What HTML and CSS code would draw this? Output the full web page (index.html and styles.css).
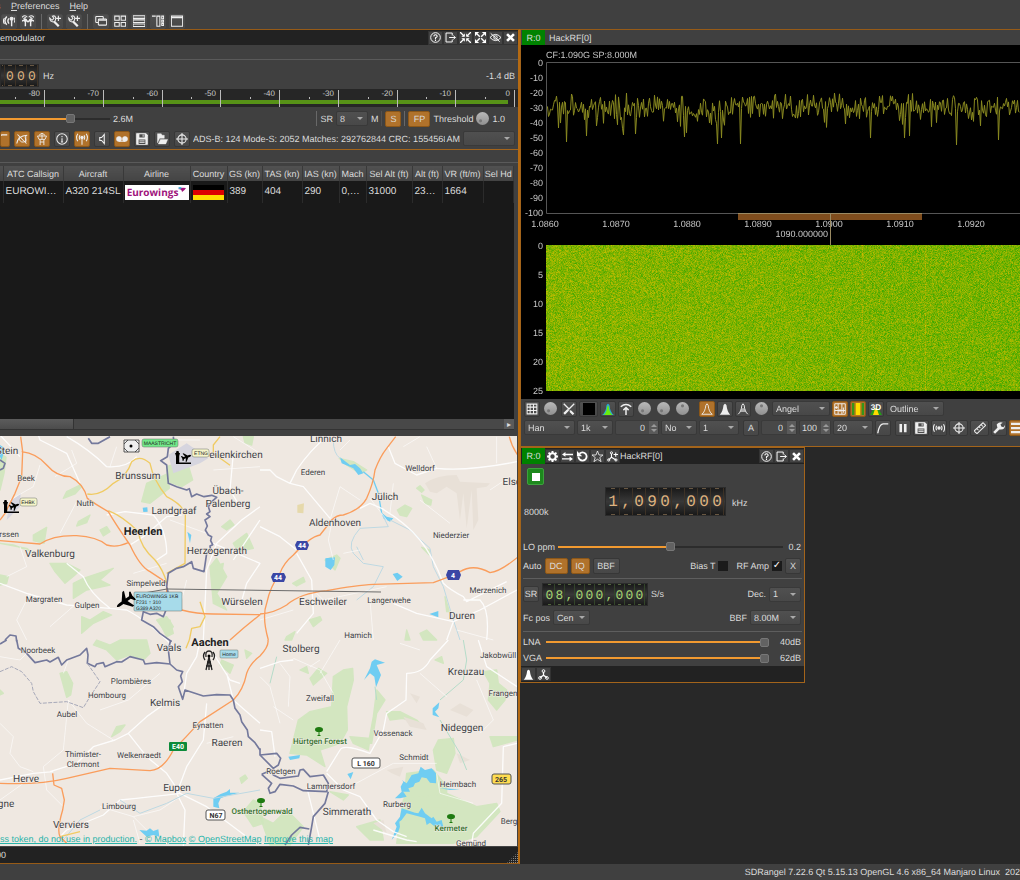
FILE: index.html
```html
<!DOCTYPE html>
<html lang="en">
<head>
<meta charset="utf-8">
<title>SDRangel</title>
<link rel="stylesheet" href="styles.css">
</head>
<body>
<svg class="sprite" aria-hidden="true">
  <symbol id="i-ant" viewBox="0 0 16 16"><path d="M11.500 15V7M5 2Q0 8 5 13M8 4.500Q5 8 8 11.500" stroke-width="1.900"/><path d="M2 4Q-1 8 2 12M15 3.500Q16.500 7 15 10"/><circle cx="11.500" cy="5" r="2" fill="currentColor"/></symbol>
  <symbol id="i-mimo" viewBox="0 0 16 16"><path d="M4.500 15V8M11.500 15V8M0 8L4.500 6L8 9L11.500 6L16 8" stroke-width="1.900"/><path d="M0 3Q4-1 7 3M9 3Q12-1 16 3M2 5L5 3M14 5L11 3" stroke-width="1.600"/><circle cx="4.500" cy="7" r="1.500" fill="currentColor"/><circle cx="11.500" cy="7" r="1.500" fill="currentColor"/></symbol>
  <symbol id="i-wplus" viewBox="0 0 16 16"><path d="M7 9L13 15" stroke-width="3"/><path d="M1 4L4 7L6.500 4.500L4.500 1.500Q9 0 9 5L8.500 7L7 9Q1 10 1 4Z"/><path d="M12.500 1V8M9.500 4.500H16" stroke-width="1.500"/></symbol>
  <symbol id="i-windows" viewBox="0 0 16 16"><rect x="1" y="2" width="10" height="8" rx="1"/><rect x="4.500" y="5.500" width="11" height="8" rx="1" fill="#4a4a4a"/><path d="M5 7H15"/></symbol>
  <symbol id="i-tiles" viewBox="0 0 16 16"><path d="M1 1.500H7V7H1ZM9.500 1.500H15.500V7H9.500ZM1 10H7V15H1ZM9.500 10H15.500V15H9.500Z"/></symbol>
  <symbol id="i-rows" viewBox="0 0 16 16"><path d="M0 1H16V4.500H0ZM0 6.500H16V10H0ZM0 12H16V15.500H0Z"/></symbol>
  <symbol id="i-cols" viewBox="0 0 16 16"><path d="M0 1.500H5M6.500 1.500H10.500V15H6.500ZM13 1.500H15.500V5H13ZM13 7H15.500V9.500H13ZM13 11.500H15.500V14H13Z"/></symbol>
  <symbol id="i-win" viewBox="0 0 16 16"><path d="M.500 1.500H15.500V15H.500ZM0 3.500H16"/></symbol>
  <symbol id="i-help" viewBox="0 0 16 16"><circle cx="8" cy="8" r="7"/><path d="M5.500 6.300Q5.800 4 8 4T10.500 6.200Q10.500 7.200 8 8.500V10M8 11V13" stroke-width="1.600"/></symbol>
  <symbol id="i-exit" viewBox="0 0 16 16"><path d="M10.500 5V1.500H1.500V14.500H10.500V11M6 8H15M12 5L15 8L12 11"/></symbol>
  <symbol id="i-shrink" viewBox="0 0 16 16"><path d="M0 0L6 6M16 0L10 6M0 16L6 10M16 16L10 10" stroke-width="2"/><path d="M7 2V7H2ZM9 2V7H14ZM7 14V9H2ZM9 14V9H14Z" fill="currentColor" stroke="none"/></symbol>
  <symbol id="i-grow" viewBox="0 0 16 16"><path d="M3 3L7 7M13 3L9 7M3 13L7 9M13 13L9 9" stroke-width="2"/><path d="M0 0H6L0 6ZM16 0H10L16 6ZM0 16H6L0 10ZM16 16H10L16 10Z" fill="currentColor" stroke="none"/></symbol>
  <symbol id="i-hide" viewBox="0 0 16 16"><path d="M0 8Q8-1 16 8Q8 17 0 8ZM1 2L14 14"/><circle cx="8" cy="8" r="2.500"/></symbol>
  <symbol id="i-x" viewBox="0 0 16 16"><path d="M3 3L13 13M13 3L3 13" stroke-width="3.800"/></symbol>
  <symbol id="i-curve" viewBox="0 0 16 16"><path d="M1 15Q3 3 8 2.500H15" stroke-width="1.900"/></symbol>
  <symbol id="i-nocurve" viewBox="0 0 16 16"><path d="M2 2L14 14M1 14Q2 4 15 3M13 3V12" stroke-width="1.400"/><path d="M4 6Q5 13 10 12T12 6" stroke-width="1.200"/></symbol>
  <symbol id="i-tower" viewBox="0 0 16 16"><path d="M4 3L8 0L12 3M2 4H14L12 8.500H4ZM5.500 9V16M10.500 9V16M5.500 12H10.500M8 0V8" stroke-width="1.200"/></symbol>
  <symbol id="i-info" viewBox="0 0 16 16"><circle cx="8" cy="8" r="7"/><path d="M8 7V12M8 4V5.500M6.500 12H9.500" stroke-width="1.500"/></symbol>
  <symbol id="i-bcast" viewBox="0 0 16 16"><path d="M8 7V15.500M2.500 1Q-1 6 2.500 11M13.500 1Q17 6 13.500 11M5.300 3Q3.500 6 5.300 9M10.700 3Q12.500 6 10.700 9" stroke-width="1.400"/><circle cx="8" cy="6" r="1.600" fill="currentColor"/></symbol>
  <symbol id="i-spk" viewBox="0 0 16 16"><path d="M5 6H7.500L11 2V14L7.500 10H5Z" stroke-width="1.500"/></symbol>
  <symbol id="i-voice" viewBox="0 0 16 16"><circle cx="4" cy="8" r="3" fill="currentColor"/><circle cx="12" cy="8" r="3" fill="currentColor"/><path d="M4 11H12"/></symbol>
  <symbol id="i-save" viewBox="0 0 16 16"><path d="M1 1H13L15 3V15H1Z" fill="currentColor"/><path d="M4.500 1.500H11.500V6H4.500Z M3.500 8.500H12.500V14.500H3.500Z" fill="#4b4b4b" stroke="none"/><path d="M4.500 10.500H11.500M4.500 12.500H11.500M9.500 2V5" stroke-width="1.200"/></symbol>
  <symbol id="i-open" viewBox="0 0 16 16"><path d="M2 13V1H7L8 3H11V7H5L2 13Z M3 14.500L6 8.500H15.500L13 14.500Z" fill="currentColor" stroke-width=".6"/></symbol>
  <symbol id="i-target" viewBox="0 0 16 16"><circle cx="8" cy="8" r="5.500"/><path d="M8 0V16M0 8H16"/></symbol>
  <symbol id="i-grid" viewBox="0 0 16 16"><path d="M1.500 1.500H14.500V14.500H1.500ZM5.500 1.500V14.500M10 1.500V14.500M1.500 5.500H14.500M1.500 10H14.500"/></symbol>
  <symbol id="i-brush" viewBox="0 0 16 16"><path d="M1 1L8 8M9 10L13 14M15 1L7 9" stroke-width="1.800"/><path d="M7 9L1.500 14.500M10 11L14 15" stroke-width="3"/></symbol>
  <symbol id="i-spec" viewBox="0 0 16 16"><path d="M0 16Q5 13 6 3Q8-1 10 3Q11 13 16 16Z" fill="#28a7d8" stroke="none"/><path d="M2 16Q6 13 7 5Q8 1 9 5Q10 13 14 16Z" fill="#6aec10" stroke="none"/></symbol>
  <symbol id="i-up" viewBox="0 0 16 16"><path d="M8 16V6M4.500 9.500L8 6L11.500 9.500M1 5Q8-1 15 5" stroke-width="2"/></symbol>
  <symbol id="i-peak" viewBox="0 0 16 16"><path d="M1 15Q5.500 12 6.500 3Q8-1 9.500 3Q10.500 12 15 15Z" stroke-width="1.200"/></symbol>
  <symbol id="i-fill" viewBox="0 0 16 16"><path d="M1 15.500Q5 12 6 3Q8-1 10 3Q11 12 15 15.500Z" fill="currentColor" stroke="none"/></symbol>
  <symbol id="i-half" viewBox="0 0 16 16"><path d="M6 7H10L11.500 12H4.500Z" fill="#aaa" stroke="none"/><path d="M1.500 15Q5.500 12 6.500 3Q8-1 9.500 3Q10.500 12 14.500 15" stroke-width="1.300"/></symbol>
  <symbol id="i-hist" viewBox="0 0 16 16"><path d="M1 1H15V15H1ZM5.500 1V15M10.500 1V15M1 10H15M1 6H5M3 4V8M8 8V12M12.500 6V13" stroke-width="1.300"/></symbol>
  <symbol id="i-wfall" viewBox="0 0 16 16"><path d="M0 0H16V16H0Z" fill="#35951b" stroke="none"/><path d="M3 0H13V16H3Z" fill="#b07a18" stroke="none"/><path d="M5 0H11V16H5Z" fill="#ffdc00" stroke="none"/></symbol>
  <symbol id="i-3d" viewBox="0 0 16 16"><path d="M0 16L5 7H11L16 16Z" fill="#239b18" stroke="none"/><path d="M4 16L7 7H9L12 16Z" fill="#ffd900" stroke="none"/><text x="8" y="9" text-anchor="middle" font-size="11" font-weight="bold" fill="#fff" stroke="none">3D</text></symbol>
  <symbol id="i-pause" viewBox="0 0 16 16"><path d="M5 2.500V13.500M11 2.500V13.500" stroke-width="3.500"/></symbol>
  <symbol id="i-mark" viewBox="0 0 16 16"><circle cx="8" cy="8" r="1.600" fill="currentColor"/><path d="M5 5Q3 8 5 11M2 3Q-1 8 2 13M11 5Q13 8 11 11M14 3Q17 8 14 13" stroke-width="1.500"/></symbol>
  <symbol id="i-ruler" viewBox="0 0 16 16"><path d="M0 12L12 1L15.500 4.500L4 15.500ZM4 9L6 11M7 6.500L8.500 8M10 4L12 6"/></symbol>
  <symbol id="i-wrench" viewBox="0 0 16 16"><path d="M1.500 14.500L9 7" stroke-width="3.500"/><path d="M5 3Q9-1 13 1L10 3L11 6L14 7L16 4Q16 11 9 10Q5 8 5 3Z" fill="currentColor" stroke="none"/></symbol>
  <symbol id="i-lines" viewBox="0 0 16 16"><path d="M0 2.500H16M0 8H16M0 13.500H16" stroke-width="3"/></symbol>
  <symbol id="i-gear" viewBox="0 0 16 16"><circle cx="8" cy="8" r="4.700" stroke-width="3"/><path d="M8 0V3M8 13V16M0 8H3M13 8H16M2.300 2.300L4.500 4.500M11.500 11.500L13.700 13.700M13.700 2.300L11.500 4.500M4.500 11.500L2.300 13.700" stroke-width="2.800"/></symbol>
  <symbol id="i-swap" viewBox="0 0 16 16"><path d="M3 5H16M0 11.500H13" stroke-width="2"/><path d="M5 1.500V8.500L0 5ZM11 8V15L16 11.500Z" fill="currentColor" stroke="none"/></symbol>
  <symbol id="i-reload" viewBox="0 0 16 16"><path d="M3.500 4Q8 0 12.500 4Q15.500 8 12.500 12Q8 16 3.500 12Q2 10 2 8" stroke-width="2.600"/><path d="M0 0V7.500H7.500Z" fill="currentColor" stroke="none"/></symbol>
  <symbol id="i-star" viewBox="0 0 16 16"><path d="M8 0L10.200 5.800H16L11.300 9.500L13.200 15.500L8 12L2.800 15.500L4.700 9.500L0 5.800H5.800Z" stroke-width="1.100"/></symbol>
  <symbol id="i-tree" viewBox="0 0 16 16"><path d="M6.500 4V9L2.500 13M6.500 9L13 13M9.500 5H16M12.700 2V8.500" stroke-width="1.600"/><circle cx="6.500" cy="2.700" r="1.600"/><circle cx="2.500" cy="13" r="1.600"/><circle cx="13" cy="13" r="1.600"/></symbol>
  <symbol id="i-net" viewBox="0 0 16 16"><path d="M8 4V9L3 12.500M8 9L13 12.500" stroke-width="1.900"/><circle cx="8" cy="3" r="2"/><circle cx="3" cy="13" r="2"/><circle cx="13" cy="13" r="2"/></symbol>
  <symbol id="i-plane" viewBox="-10 -10 20 20"><path d="M0-10Q1.500-9 1.500-6V-3L9 3V5L1.500 2V6L5 8.500V10L0 9L-5 10V8.500L-1.500 6V2L-9 5V3L-1.500-3V-6Q-1.500-9 0-10Z"/></symbol>
  <symbol id="i-airport" viewBox="0 0 17 16"><path d="M0 3H1L1.500 1H3.500L4 3H5L4.200 6V12.500H16V14H1V6Z"/><g transform="translate(11.500 7) rotate(70) scale(.5)"><path d="M0-10Q2-9 2-6V-3L9 3V5L2 2V6L5 8V10L0 9L-5 10V8L-2 6V2L-9 5V3L-2-3V-6Q-2-9 0-10Z"/></g></symbol>
  <symbol id="i-treepin" viewBox="0 0 10 10"><path d="M5 9.500V5M3.500 9.500H6.500" stroke="#1e7a10"/><ellipse cx="5" cy="3.500" rx="4" ry="2.600" fill="#1e7a10" stroke="none"/></symbol>
</svg>

<nav class="menubar"><a href="#">s</a><a href="#"><u>P</u>references</a><a href="#"><u>H</u>elp</a></nav>
<div class="toolbar">
  <button class="btn"><svg><use href="#i-ant"/></svg></button><button class="btn"><svg><use href="#i-mimo"/></svg></button><i class="vsep"></i>
  <button class="btn"><svg><use href="#i-wplus"/></svg></button><button class="btn"><svg><use href="#i-wplus"/></svg></button><i class="vsep"></i>
  <button class="btn"><svg><use href="#i-windows"/></svg></button><button class="btn"><svg><use href="#i-tiles"/></svg></button><button class="btn"><svg><use href="#i-rows"/></svg></button><button class="btn"><svg><use href="#i-cols"/></svg></button><button class="btn"><svg><use href="#i-win"/></svg></button>
</div>

<main class="workspace">
<section class="left">
  <header class="title dark"><span class="grow">emodulator</span>
    <button class="tb"><svg><use href="#i-help"/></svg></button><button class="tb"><svg><use href="#i-exit"/></svg></button><button class="tb"><svg><use href="#i-shrink"/></svg></button><button class="tb"><svg><use href="#i-grow"/></svg></button><button class="tb"><svg><use href="#i-hide"/></svg></button><button class="tb"><svg><use href="#i-x"/></svg></button>
  </header>
  <div class="band"></div>
  <div class="freq-row"><div class="dial"><b class="cut">,</b><b>0</b><b>0</b><b>0</b></div><span>Hz</span><span class="grow"></span><span>-1.4 dB</span></div>
  <svg class="meter" id="meter"></svg>
  <div class="row slider-row">
    <input class="range wide" type="range" aria-label="Bandwidth" min="0" max="100" value="65" style="--v:64%"><span>2.6M</span><span class="grow"></span>
    <i class="vsep"></i><label for="sr">SR</label><span class="sel w32"><select id="sr"><option>8</option></select></span><span>M</span><i class="vsep dim"></i>
    <button class="btn on w16">S</button><i class="vsep"></i><button class="btn on w21">FP</button><label for="thr">Threshold</label><input id="thr" class="knob" type="range"><span class="thr-val">1.0</span>
  </div>
  <div class="row icon-row">
    <button class="btn on half"><svg><use href="#i-curve"/></svg></button><button class="btn on"><svg><use href="#i-nocurve"/></svg></button><button class="btn on"><svg><use href="#i-tower"/></svg></button><button class="btn"><svg><use href="#i-info"/></svg></button><button class="btn on"><svg><use href="#i-bcast"/></svg></button><button class="btn"><svg><use href="#i-spk"/></svg></button><button class="btn on"><svg><use href="#i-voice"/></svg></button><button class="btn"><svg><use href="#i-save"/></svg></button><button class="btn"><svg><use href="#i-open"/></svg></button><button class="btn"><svg><use href="#i-target"/></svg></button>
    <span class="stats">ADS-B: 124 Mode-S: 2052 Matches: 292762844 CRC: 1554568</span><label for="am">AM</label><span class="sel w52"><select id="am"><option></option></select></span>
  </div>
  <div class="band lower"></div>
  <div class="table-wrap">
    <table>
      <colgroup><col class="c3"><col class="c60"><col class="c59"><col class="c67"><col class="c38"><col class="c34"><col class="c40"><col class="c38"><col class="c28"><col class="c46"><col class="c30"><col class="c41"><col></colgroup>
      <thead><tr><th></th><th>ATC Callsign</th><th>Aircraft</th><th>Airline</th><th>Country</th><th>GS (kn)</th><th>TAS (kn)</th><th>IAS (kn)</th><th>Mach</th><th>Sel Alt (ft)</th><th>Alt (ft)</th><th>VR (ft/m)</th><th>Sel Hd</th></tr></thead>
      <tbody><tr><td></td><td>EUROWI…</td><td>A320 214SL</td><td><div class="airline">Eurowings<svg viewBox="0 0 8 6"><path d="M0 2Q3 0 8 1Q7 3 4 5Q4 2 0 2Z" fill="#a0137c"/><path d="M0 1Q2-1 4 1L2 2Z" fill="#36b4d8"/></svg></div></td><td><div class="flag"></div></td><td>389</td><td>404</td><td>290</td><td>0,…</td><td>31000</td><td>23…</td><td>1664</td><td></td></tr></tbody>
    </table>
  </div>
  <div class="hscroll"><div class="handle"></div><button aria-label="Scroll right">▸</button></div>
  <div class="map-box">
  <svg class="map">
    <g class="geo" transform="translate(0 -16) scale(.33333)">
      <g class="green">
        <path d="M440 190L505 160L508 205L450 250L425 245ZM500 140L560 120L578 180L545 200L505 185ZM0 100L18 112L12 160L0 210ZM150 430L200 430L240 450L225 465L195 490L165 455ZM665 320L690 300L702 315L680 330ZM700 370L740 340L760 385L715 395ZM300 330L320 320L330 335L310 348ZM0 465L25 470L20 490L0 495ZM245 590L270 600L310 575L335 585L280 610L245 640ZM630 440L650 415L680 470L650 520L680 570L640 550ZM240 195L200 215L190 235L225 222L245 200ZM270 285L235 305L230 318L260 308ZM100 345L140 322L132 370L100 362ZM220 490L250 475L340 445L300 480L330 495L260 510L220 535ZM480 610L510 600L520 640L500 650Z"/>
        <path d="M730 50H760L755 75L735 68ZM640 440L670 430L665 460ZM470 600L500 590L520 620L500 640ZM0 370L80 385L100 400L140 410L110 400L40 375Z"/>
      </g>
      <path class="air" d="M505 105L560 70L625 115L600 130L520 160ZM30 245L62 220L60 260L20 300Z"/>
      <g class="water"><path d="M0 75L15 85L5 120L0 110ZM428 263L442 262L443 275L430 276ZM562 335L574 345L570 370Z"/></g>
      <g class="white">
        <path d="M200 50Q270 90 320 140Q380 145 410 110M320 285L375 275L460 285Q500 330 500 400L470 420M390 375L430 350L500 290L545 285M0 490L80 520L200 555L330 565L380 570Q440 600 520 680M200 430L250 470Q270 520 330 565M780 300L700 420M780 260L725 300L650 370L620 450L610 660M640 370L780 430L740 490L720 560M100 0L120 60L200 100L240 190M0 45L60 110M700 100L690 210L720 260"/>
        <path class="fine" d="M165 170L230 130L215 90M120 135L100 200L30 240M180 340L230 245M60 380L80 440L20 470M350 80L330 140M510 300L620 340M440 60L600 60M700 50L780 100M640 150L780 140M400 460L500 430M90 520L50 600L80 660M230 550L150 620M560 480L540 560"/>
      </g>
      <g class="yellow"><path d="M262 222Q300 230 340 190Q380 170 395 125Q420 103 450 130Q460 180 500 230Q550 255 556 285L555 430L500 460M325 272Q370 290 415 335Q420 380 465 420Q490 450 500 488M660 50L640 75L640 100L690 136M600 545L615 590L600 620L575 625L568 660"/></g>
      <g class="orange"><path d="M62 50L68 95L65 170L45 220L30 250L15 280L0 300M65 95Q110 100 140 135T210 170Q250 190 262 235Q290 255 325 275Q345 310 390 375Q420 440 450 455L500 488V540M0 362L120 372Q160 345 230 347Q290 350 320 375Q350 384 385 368M545 570Q590 582 640 582L780 584L730 625L690 660"/></g>
      <g class="border"><path d="M520 50L522 70L505 85L502 110L482 122L500 135L505 190L530 200L560 210L568 206L575 230L590 222L612 230L635 226L650 232L635 245L625 260L630 275L620 282L630 290L615 300L622 318L616 330L625 345L635 350L632 362L638 374L630 378L632 390L620 400L612 455L580 445L575 425L550 440L530 445L505 460L500 500L510 540L490 590L470 580L450 583L430 575L425 600L460 620L480 640L515 665M265 55L275 70L295 70L330 50M0 120L15 130L10 145L0 150M15 660L30 645L48 648L50 664"/></g>
    </g>
    <g class="geo" transform="translate(260 -16) scale(.33333)">
      <g class="green"><path d="M238 115L280 125L320 150L300 160L260 135ZM412 270L435 255L455 265L440 290L420 285ZM470 205L480 197L492 210L485 217ZM485 225L515 240L512 255L495 250ZM195 420L230 405L240 415L225 450ZM98 490L130 472L135 485L110 498ZM485 382L508 390L508 405ZM148 600L180 590L185 600L160 620ZM440 630L450 660H435ZM480 640L500 630L530 660H490ZM555 530L568 575L560 575ZM80 650L105 635L95 660H75Z"/></g>
      <path class="hill" d="M495 190Q530 165 590 165L600 185L690 190L680 200L650 205L655 300L640 330L635 210L620 325L610 220L600 300L590 220L560 200L530 220L510 215Z"/>
      <path d="M112 255L132 250L130 280L112 278Z" fill="#e6d9ab"/>
      <g class="water"><path d="M240 112L270 135L285 132L300 145L310 160L295 165L280 145L245 130ZM365 278L380 290L400 295L390 305L370 295ZM196 415L225 412L223 435L212 450L196 440ZM398 462L412 458L428 470L412 483ZM508 582L535 573L535 592Z"/><path d="M310 155L340 180L355 220L365 280" fill="none" stroke="#6fcdf2" stroke-width="4"/></g>
      <path class="stream" d="M220 60Q220 100 240 115M370 290L385 320L300 325Q260 370 280 400L310 430L370 440L340 500L290 540M390 300L450 330L510 385L520 440L550 500L580 600L600 660M290 380L310 420"/>
      <g class="white">
        <path d="M200 50Q150 90 110 150L90 190L50 170L30 150L0 150M90 190L130 200L210 295M300 265L330 250L365 265Q440 310 480 360Q520 410 550 490Q570 510 610 530L620 545L740 485M385 80L405 130L470 165L530 145Q620 155 771 125M110 400L155 480L160 580L110 640M0 320L60 350L110 390M400 550L470 580L580 605L660 570L771 510M580 605L560 660M610 540H660Q690 570 680 660"/>
        <path class="fine" d="M210 300L240 200L300 240M330 235L380 300M530 145L500 80M710 50V130M480 240L570 310M480 50L430 80M215 310L205 360L220 420M160 510L190 540L380 500M750 170L690 210M270 60L240 90M400 190L390 280M590 630L700 660M250 400L300 390M0 600L100 570M330 540L340 660"/>
      </g>
      <g class="orange"><path d="M25 660Q5 590 20 550Q30 500 60 460Q70 430 100 405Q150 350 180 345Q200 320 215 300Q230 285 250 285Q300 270 320 235Q340 190 345 150Q360 110 380 85L407 50M0 582Q40 580 80 555Q120 520 200 512Q290 495 340 493L520 488Q560 475 600 455Q640 430 690 458Q720 455 775 410M748 50Q755 80 775 108"/></g>
    </g>
    <g class="geo" transform="translate(0 204) scale(.33333)">
      <g class="green"><path d="M180 100L200 95L218 130L212 165L200 172ZM280 15L290 0L330 15L360 0H440L450 40L430 60L390 45L350 60L320 30ZM335 290L350 260L375 255L360 275ZM665 60L700 75L690 100L660 75ZM735 30L755 40L740 55ZM720 415L735 405L742 415L725 430ZM730 515L760 480L780 490L790 550L760 560L740 530ZM0 150L10 160L0 165Z"/></g>
      <g class="water"><path d="M640 475Q660 460 680 455L690 447L690 458L718 458L680 468L662 475L655 490L658 505L640 500ZM418 570L440 572L450 565L460 573L475 568L478 590L460 585L440 590Z"/></g>
      <g class="white">
        <path d="M510 180L440 230L385 280L345 300L280 320L230 370L150 395M385 280L440 350L500 400L540 460L620 500L740 590M620 190L610 300L560 380L530 460L555 510L550 620M540 460Q460 470 360 480L310 525L200 570L180 590M0 420L100 400L160 395M680 100L700 180L780 250M600 0L590 50L560 100L550 170M640 40L690 120L720 130"/>
        <path class="fine" d="M205 180L190 330L130 380L140 450L190 500M205 180L260 250L340 300M190 100L205 60M0 50L60 60L80 40M0 250L40 290L30 340L60 380L100 395M400 540L420 610M440 570L400 530L300 500M620 310L700 290M540 470L480 510L400 530M70 430L0 480M300 210L385 180L480 100"/>
      </g>
      <path class="stream" d="M780 450L640 475L560 460L500 490L420 520L360 480M190 600L240 540L300 510"/>
      <g class="yellow"><path d="M180 590L240 575M568 0L558 25"/></g>
      <g class="orange"><path d="M0 430Q120 435 200 415L330 385Q420 390 450 392Q490 390 520 330Q560 290 600 245L700 180Q730 150 740 100Q750 70 780 48Q807 20 804 0M158 400L162 435L185 445L193 480L188 510Q170 570 180 590L200 610"/></g>
      <g class="border"><path d="M50 0L55 25L80 40L105 68L140 60L150 66L175 52L185 75L200 60L240 45L260 25L264 45L262 70L285 80L290 72L310 68L315 80L350 65L365 66L390 50L430 60L435 72L470 68L510 72L530 90L548 95L542 108L547 125L535 140L548 178L555 150L610 168L650 164L690 165L700 180L705 205L720 225L725 245L742 270L745 290L765 308L780 330M0 12L20 0M512 0L505 30L510 72"/><path class="dash" d="M0 95L35 80L65 95L95 130L100 155L120 190L200 185L250 203L270 170L300 125L262 70"/></g>
    </g>
    <g class="geo" transform="translate(260 204) scale(.33333)">
      <g class="green"><path d="M115 240L150 215L215 200L220 110L250 90L278 85L280 120L260 200L262 270L240 310L180 330L195 380L140 345L90 340ZM120 90L140 80L145 100ZM175 85L200 100L160 135L150 115ZM270 290L330 295L325 330L280 310ZM350 150L375 180L350 220L335 310L325 310L340 230ZM380 215L420 215L470 240L490 260L430 235L390 240ZM535 300L580 295L585 340L560 400L530 390L520 330ZM670 95L710 90L715 130L740 150L735 180L710 210L685 180L690 130ZM690 290L771 290V300L700 320ZM430 480L560 460L650 500L710 490L720 515L650 590L580 610H410L420 540ZM0 530L40 550L80 510L130 560L90 615H30ZM525 60L545 50L550 70ZM290 560L360 540L370 600L330 600ZM210 455L265 465L250 480ZM440 400L520 390L560 440L560 500H430Z"/></g>
      <g class="relief"><path d="M380 390L430 380L420 410L395 400ZM600 190L640 210L620 230L570 210ZM430 230L490 250L500 270L450 260ZM590 340L630 360L600 370ZM340 550L370 540L380 580ZM450 160L480 170L470 190Z"/></g>
      <g class="water"><path d="M312 120L330 85L335 65L345 58L375 68L350 75L363 105L348 142L343 110L330 100ZM518 205L538 187L535 205L525 215L538 232L518 225ZM85 350L120 345L118 355L90 360ZM262 402L280 396L272 418ZM455 405L475 400L482 380L495 390L515 385L528 400V430L510 428L500 415L485 412L478 425L465 430L460 440L445 445L450 455L430 455L440 470L420 475L405 475L425 455L422 440L430 425L425 420L440 430ZM440 510L465 518L475 520L485 503L495 520L515 535L520 530L530 545L545 540L550 560L545 562L535 555L525 560L510 548L500 555L495 535L480 530L440 520L425 540L418 545L420 560L415 575L395 600L410 560L405 550L420 530L425 505ZM540 445L600 448L570 450Z"/></g>
      <path class="stream green-stream" d="M610 0L620 60L610 120L540 180M540 240L600 340L620 390M345 140L350 180M50 50L30 130"/>
      <g class="white">
        <path d="M565 0L510 60Q490 100 440 100L438 180Q410 200 380 220L370 270L330 340Q250 310 240 330L200 395M771 310L730 320L725 490L640 580L635 610M440 590L400 575L350 540L300 470L250 450L200 400M0 85L60 65L100 60M655 0L680 80L771 140M0 270L35 275L45 350M140 440L160 520L180 600M340 570L440 600L470 605"/>
        <path class="fine" d="M100 55L180 90L220 160M60 70L90 110L85 200M270 440L400 370L530 370M150 80L180 60M650 120L700 240L660 280M480 100L560 170M240 0L180 100M420 10L480 30M530 400L540 460L640 490M160 300L250 300M100 240L40 200M0 110L30 140L60 250"/>
      </g>
      <g class="border"><path d="M0 325V345L50 340L62 355L55 375L40 385L0 345M5 403L35 390L40 405L60 415L115 408L120 390L130 388L150 410L190 405L205 430L200 455L130 452L100 438L60 433L45 455L30 460L25 445L35 430L5 403M205 455L195 490L160 530L155 560L145 615M75 615L95 585L120 562L148 567"/></g>
    </g>
    <path d="M144 157L167 153L381 156" fill="none" stroke="#6b6b6b"/>
    <g class="lbl s">
      <text x="326" y="6" class="m">Linnich</text><text x="313" y="39">Ederen</text><text x="420" y="35">Welldorf</text><text x="26" y="45">Beek</text><text x="85" y="70">Nuth</text><text x="451" y="102">Niederzier</text><text x="146" y="150">Simpelveld</text><text x="44" y="166">Margraten</text><text x="87" y="172">Gulpen</text><text x="488" y="157">Merzenich</text><text x="389" y="167">Langerwehe</text><text x="358" y="202">Hamich</text><text x="498" y="222">Jakobwüll</text><text x="38" y="217">Noorbeek</text><text x="131" y="248">Plombières</text><text x="107" y="262">Hombourg</text><text x="67" y="281">Aubel</text><text x="208" y="292">Eynatten</text><text x="83" y="321">Thimister-</text><text x="83" y="331">Clermont</text><text x="139" y="322">Welkenraedt</text><text x="119" y="373">Limbourg</text><text x="320" y="265">Zweifall</text><text x="393" y="300">Vossenack</text><text x="414" y="324">Schmidt</text><text x="458" y="351">Heimbach</text><text x="397" y="371">Rurberg</text><text x="281" y="338">Roetgen</text><text x="331" y="353">Lammersdorf</text><text x="471" y="410">Gemünd</text><text x="503" y="260">Frangen</text><text x="9" y="101">rssen</text><text x="509" y="388">Berg</text>
    </g>
    <g class="lbl m">
      <text x="7" y="18">Stein</text><text x="138" y="43">Brunssum</text><text x="236" y="22">eilenkirchen</text><text x="228" y="58">Übach-</text><text x="228" y="71">Palenberg</text><text x="174" y="78">Landgraaf</text><text x="217" y="118">Herzogenrath</text><text x="50" y="121">Valkenburg</text><text x="385" y="64">Jülich</text><text x="512" y="49">Elsd</text><text x="335" y="90">Aldenhoven</text><text x="242" y="169">Würselen</text><text x="323" y="169">Eschweiler</text><text x="462" y="183">Duren</text><text x="169" y="215">Vaals</text><text x="301" y="216">Stolberg</text><text x="466" y="239">Kreuzau</text><text x="165" y="270">Kelmis</text><text x="227" y="310">Raeren</text><text x="462" y="295">Nideggen</text><text x="26" y="346">Herve</text><text x="177" y="355">Eupen</text><text x="6" y="371">gne</text><text x="71" y="392">Verviers</text><text x="347" y="379">Simmerath</text>
    </g>
    <g class="lbl l"><text x="143" y="99">Heerlen</text><text x="210" y="210">Aachen</text></g>
    <g class="lbl park"><text x="320" y="308">Hürtgen Forest</text><text x="262" y="378">Osthertogenwald</text><text x="451" y="395">Kermeter</text></g>
    <use href="#i-treepin" x="314" y="290" width="10" height="10"/><use href="#i-treepin" x="256" y="361" width="10" height="10"/><use href="#i-treepin" x="446" y="377" width="10" height="10"/>
    <g class="shield">
      <path d="M295 109L297 105H307L309 109L307 114H297ZM271 141L273 137H284L286 141L284 146H273ZM446 139L448 134H459L461 139L459 144H448Z" fill="#3b47a5"/>
      <rect x="169" y="306" width="18" height="9" rx="1" fill="#0d8b3a"/>
      <g stroke="#555"><rect x="206" y="374" width="19" height="10" rx="2" fill="#fff"/><rect x="352" y="322" width="28" height="10" rx="2" fill="#fff"/><rect x="492" y="338" width="19" height="10" rx="2" fill="#ffdc50"/></g>
      <g fill="#fff"><text x="302" y="112">44</text><text x="278" y="144">44</text><text x="453" y="142">4</text><text x="178" y="313">E40</text></g>
      <g fill="#333"><text x="216" y="382">N67</text><text x="366" y="330">L 160</text><text x="501" y="346">265</text></g>
    </g>
    <path d="M124 4H139V16H124ZM124 8L128 4M135 4L139 8M124 12L128 16M135 16L139 12" fill="#eee" stroke="#333" stroke-width=".8"/><circle cx="131" cy="10" r="1.500"/>
    <use href="#i-airport" x="175" y="14" width="17" height="16"/><use href="#i-airport" x="3" y="63" width="17" height="16"/>
    <g class="pin"><rect x="142" y="3" width="36" height="8" rx="2" fill="#73e889"/><rect x="192" y="13" width="17" height="8" rx="2" fill="#f6f5ca"/><rect x="20" y="62" width="17" height="8" rx="2" fill="#f6f5ca"/><rect x="220" y="214" width="18" height="8" rx="1" fill="#a7dbea"/><rect x="134" y="156" width="48" height="19" rx="1" fill="#a7dbea"/>
      <text x="160" y="9" text-anchor="middle">MAASTRICHT</text><text x="201" y="19" text-anchor="middle">ETNG</text><text x="28" y="68" text-anchor="middle">EHBK</text><text x="229" y="220" text-anchor="middle">Home</text><text x="136" y="162">EUROWINGS 1KB</text><text x="136" y="168">F231 ↑ 310</text><text x="136" y="174">G389 A320</text></g>
    <g transform="translate(125 165) rotate(235)"><use href="#i-plane" x="-10" y="-10" width="20" height="20"/></g>
    <path d="M209 221V234M206 234L209 221L212 234M206 230H212M207 226H211M205 224Q202 220 205 216M213 224Q216 220 213 216M206 221Q205 215 209 215T212 221" fill="none" stroke="#222" stroke-width="1.300"/><circle cx="209" cy="220" r="1.500"/>
  </svg>
  <p class="attrib"><a href="#">ss token, do not use in production.</a> - <a href="#">© Mapbox</a> <a href="#">© OpenStreetMap</a> <a href="#">Improve this map</a></p>
  </div>
  <footer class="strip"><span>00</span><i class="grip"></i></footer>
</section>

<section class="right">
  <article class="spectrum">
    <header class="title"><span class="badge">R:0</span><span class="name">HackRF[0]</span></header>
    <div class="plots"><canvas id="plot"></canvas><svg id="axes"></svg></div>
    <div class="row ctl">
      <button class="btn"><svg><use href="#i-grid"/></svg></button><input class="knob" type="range" aria-label="Grid intensity"><button class="btn"><svg><use href="#i-brush"/></svg></button><button class="btn w20" aria-label="Trace colour"><i class="swatch"></i></button><button class="btn"><svg><use href="#i-spec"/></svg></button><button class="btn"><svg><use href="#i-up"/></svg></button><input class="knob" type="range" aria-label="Decay"><input class="knob" type="range" aria-label="Divisor"><input class="knob mid" type="range" aria-label="Stroke">
      <i class="gap"></i><button class="btn on"><svg><use href="#i-peak"/></svg></button><button class="btn"><svg><use href="#i-fill"/></svg></button><button class="btn"><svg><use href="#i-half"/></svg></button><input class="knob mid" type="range" aria-label="Trace intensity"><span class="sel w60"><select aria-label="Color map"><option>Angel</option></select></span><button class="btn on"><svg><use href="#i-hist"/></svg></button><button class="btn on"><svg><use href="#i-wfall"/></svg></button><button class="btn"><svg><use href="#i-3d"/></svg></button><span class="sel w60"><select aria-label="3D style"><option>Outline</option></select></span>
    </div>
    <div class="row ctl">
      <span class="sel w51"><select aria-label="Window"><option>Han</option></select></span><span class="sel w36"><select aria-label="FFT size"><option>1k</option></select></span><span class="spin w44"><input type="text" value="0" aria-label="Overlap"><i></i></span><span class="sel w36"><select aria-label="Averaging"><option>No</option></select></span><span class="sel w40"><select aria-label="Average count"><option>1</option></select></span>
      <i class="gap"></i><button class="btn">A</button><span class="spin w36"><input type="text" value="0" aria-label="Reference level"><i></i></span><span class="spin w32"><input type="text" value="100" aria-label="Range"><i></i></span><span class="sel w40"><select aria-label="FPS"><option>20</option></select></span><button class="btn"><svg><use href="#i-curve"/></svg></button><i class="gap"></i><button class="btn"><svg><use href="#i-pause"/></svg></button><button class="btn"><svg><use href="#i-save"/></svg></button><button class="btn"><svg><use href="#i-mark"/></svg></button><button class="btn w20"><svg><use href="#i-target"/></svg></button><button class="btn w20"><svg><use href="#i-ruler"/></svg></button><button class="btn"><svg><use href="#i-wrench"/></svg></button><button class="btn on"><svg><use href="#i-lines"/></svg></button>
    </div>
  </article>

  <article class="device">
    <header class="title dark"><span class="badge">R:0</span><button class="tb"><svg><use href="#i-gear"/></svg></button><button class="tb"><svg><use href="#i-swap"/></svg></button><button class="tb"><svg><use href="#i-reload"/></svg></button><button class="tb"><svg><use href="#i-star"/></svg></button><button class="tb"><svg><use href="#i-tree"/></svg></button><span class="grow">HackRF[0]</span><button class="tb"><svg><use href="#i-help"/></svg></button><button class="tb"><svg><use href="#i-exit"/></svg></button><button class="tb"><svg><use href="#i-x"/></svg></button></header>
    <div class="tune"><div class="tune-left"><button class="stop" aria-label="Stop"></button><span>8000k</span></div><div class="dial big"><b>1</b><b>,</b><b>0</b><b>9</b><b>0</b><b>,</b><b>0</b><b>0</b><b>0</b></div><span class="unit">kHz</span></div>
    <div class="drow lo"><label for="lo">LO ppm</label><input id="lo" class="range grow" type="range" value="50" style="--v:50%"><output>0.2</output></div>
    <div class="drow auto"><span>Auto</span><button class="btn on w23">DC</button><button class="btn on w20">IQ</button><button class="btn w27">BBF</button><span class="grow"></span><label for="bias">Bias T</label><input id="bias" type="checkbox"><label for="amp" class="amp">RF Amp</label><input id="amp" type="checkbox" checked><button class="btn">X</button></div>
    <hr>
    <div class="drow rate"><button class="btn">SR</button><div class="dial green-dial"><b>0</b><b>8</b><b>,</b><b>0</b><b>0</b><b>0</b><b>,</b><b>0</b><b>0</b><b>0</b></div><span>S/s</span><span class="grow"></span><label for="dec">Dec.</label><span class="sel w32"><select id="dec"><option>1</option></select></span></div>
    <div class="drow fc"><label for="fc">Fc pos</label><span class="sel w37"><select id="fc"><option>Cen</option></select></span><span class="grow"></span><label for="bbf">BBF</label><span class="sel w51"><select id="bbf"><option>8.00M</option></select></span></div>
    <hr>
    <div class="drow gain"><label for="lna">LNA</label><input id="lna" class="range grow" type="range" value="100" style="--v:98%"><output>40dB</output></div>
    <div class="drow gain"><label for="vga">VGA</label><input id="vga" class="range grow" type="range" value="100" style="--v:98%"><output>62dB</output></div>
    <footer class="title dark"><button class="tb"><svg><use href="#i-fill"/></svg></button><button class="tb"><svg><use href="#i-net"/></svg></button></footer>
  </article>
</section>
</main>
<footer class="status"><span>SDRangel 7.22.6 Qt 5.15.13 OpenGL 4.6 x86_64 Manjaro Linux&nbsp; 2025</span></footer>
<script src="app.js"></script>
</body>
</html>
```
FILE: styles.css
```css
* { box-sizing: border-box; }
html, body { height: 100%; }
body { margin: 0; display: flex; flex-direction: column; overflow: hidden; background: #404040; color: #dcdcdc; font: 9px/12px "Liberation Sans", Arial, sans-serif; white-space: nowrap; text-rendering: geometricPrecision; }
button, input, select { font: inherit; color: inherit; margin: 0; padding: 0; border: 0; text-rendering: inherit; }
.sprite { position: absolute; width: 0; height: 0; }
.grow { flex: 1; min-width: 0; }

.menubar { flex: none; display: flex; height: 13px; gap: 10px; margin-left: -4px; }
.menubar a { color: inherit; text-decoration: none; }
.menubar a:first-child { color: #c0894c; width: 5px; }
.toolbar { flex: none; display: flex; align-items: center; gap: 3px; height: 16px; padding-left: 1px; }
.vsep { flex: none; width: 1px; height: 15px; background: #686868; }
.toolbar .vsep { margin: 0 2px; }
.vsep.dim { background: #505050; }

.btn { flex: none; width: 16px; height: 16px; border: 1px solid #373737; border-radius: 2px; background: linear-gradient(#505050, #474747); display: grid; place-items: center; overflow: hidden; }
.btn svg, .tb svg { width: 12px; height: 12px; display: block; fill: none; stroke: currentColor; stroke-width: 1.4; color: #eee; overflow: visible; }
.toolbar .btn { height: 15px; border-color: #4a4a4a; }
.btn.on { background: #b0722b; border-color: #8c5718; }
.w16 { width: 16px; } .w20 { width: 19px; } .w21 { width: 22px; } .w23 { width: 23px; } .w27 { width: 27px; }
.w32 { width: 32px; } .w36 { width: 36px; } .w37 { width: 37px; } .w40 { width: 40px; } .w44 { width: 44px; } .w51 { width: 51px; } .w52 { width: 52px; } .w60 { width: 58px; }

.workspace { flex: 1; min-height: 0; display: grid; grid-template-columns: 26fr 25fr; grid-template-rows: minmax(0, 1fr); }
.left { min-width: 0; min-height: 0; display: flex; flex-direction: column; border: 1px solid #975b17; border-left: 0; border-right: 2px solid #b56a12; overflow: hidden; }
.right { min-width: 0; min-height: 0; background: #282828; overflow: hidden; }
.title { flex: none; height: 15px; display: flex; align-items: center; background: #404040; }
.title.dark { background: #222; }
.tb { flex: none; width: 15px; height: 14px; background: #444; border: 1px solid #333; display: grid; place-items: center; }
.tb svg { width: 11px; height: 11px; color: #fff; }
.band { flex: none; height: 15px; border-bottom: 1px solid #5a5a5a; }
.freq-row { flex: none; height: 29px; display: flex; align-items: center; gap: 4px; padding: 2px 3px 0 0; }
.dial { flex: none; display: flex; height: 23px; color: #dfb37f; font: 13px/23px "Liberation Mono", monospace; background: linear-gradient(#191919, #383838 50%, #191919); border: 1px solid #2b2b2b; overflow: hidden; }
.dial b { width: 11px; font-weight: normal; text-align: center; border-right: 1px solid #3d3226; position: relative; line-height: 23px; height: 22px; }
.dial b::before, .dial b::after { content: ""; position: absolute; left: 30%; width: 40%; height: 1px; background: currentColor; opacity: .4; }
.dial b::before { top: 0; } .dial b::after { bottom: 1px; }
.dial .cut { width: 4px; direction: rtl; }
.dial.big { height: 29px; padding: 0 1px; }
.dial.big b { width: 13px; height: 28px; font-size: 16px; line-height: 28px; }
.dial.green-dial { color: #a6d672; padding: 0 2px; }
.green-dial b { width: 10px; border-color: #33452a; }
.meter { flex: none; display: block; width: 100%; height: 18px; background: #262626; font-size: 8px; fill: #ccc; }
.row { flex: none; display: flex; align-items: center; }
.slider-row { height: 23px; gap: 3px; padding: 0 13px 0 0; }
.range { --v: 50%; appearance: none; min-width: 0; height: 12px; background: linear-gradient(#f29a30, #f29a30) 0 50% / var(--v) 2px no-repeat, linear-gradient(#2c2c2c, #2c2c2c) 0 50% / 100% 2px no-repeat; }
.range::-webkit-slider-thumb { appearance: none; width: 9px; height: 9px; border-radius: 2px; background: #626262; border: 1px solid #777; }
.range.wide { width: 110px; }
.sel { flex: none; position: relative; height: 15px; }
.sel select { appearance: none; width: 100%; height: 15px; padding: 0 3px; background: linear-gradient(#505050, #484848); border: 1px solid #393939; border-radius: 2px; line-height: 12px; }
.sel::after { content: ""; position: absolute; right: 5px; top: 6px; border: 3px solid transparent; border-top-color: #aaa; border-bottom: 0; pointer-events: none; }
.knob { appearance: none; flex: none; width: 13px; height: 13px; border-radius: 50%; background: radial-gradient(circle at 35% 68%, #777 0 1px, transparent 2px), linear-gradient(#b9b9b9, #909090); }
.knob.mid { background: radial-gradient(circle at 50% 30%, #777 0 1px, transparent 2px), linear-gradient(#b9b9b9, #909090); }
.knob::-webkit-slider-thumb { appearance: none; width: 0; height: 0; }
.icon-row { height: 19px; gap: 4px; padding-bottom: 2px; }
.icon-row .half { width: 10px; }
.icon-row .half svg { margin-left: -6px; }
.stats { flex: 1; min-width: 0; overflow: hidden; margin: 0 -2px 0 -1px; }
.icon-row .sel { margin: 0 3px 0 -1px; }
.band.lower { height: 14px; border-top: 1px solid #a3641b; }
.table-wrap { flex: 1 1 0; min-height: 80px; margin: 3px 4px 0 0; background: #191919; overflow: hidden; }
table { width: 100%; table-layout: fixed; border-collapse: collapse; }
th { height: 15px; padding: 0; font-weight: normal; background: linear-gradient(#515151, #444); border-right: 1px solid #393939; overflow: hidden; }
td { height: 22px; padding: 0 2px; border-right: 1px solid #2b2b2b; font-size: 10px; background: #191919; overflow: hidden; }
td:nth-child(4), td:nth-child(5) { padding: 0 1px; }
td:first-child { padding: 0; }
.c3 { width: 3px; } .c60 { width: 60px; } .c59 { width: 60px; } .c67 { width: 67px; } .c38 { width: 37px; } .c34 { width: 35px; } .c40 { width: 40px; } .c28 { width: 27px; } .c46 { width: 46px; } .c30 { width: 30px; } .c41 { width: 41px; }
.airline { display: flex; align-items: center; justify-content: center; height: 15px; background: #fff; color: #a0137c; font: bold 10px/15px "Open Sans", sans-serif; }
.airline svg { width: 8px; height: 6px; align-self: start; margin-top: 2px; }
.flag { width: 31px; height: 15px; margin-left: 1px; background: linear-gradient(#000 33%, #d00 33% 66%, #fd0 66%); }
.hscroll { flex: none; display: flex; justify-content: space-between; height: 11px; margin: 0 4px 6px 0; background: #484848; border-bottom: 1px solid #333; }
.hscroll .handle { width: 74px; background: linear-gradient(#5c5c5c, #4c4c4c); border-right: 1px solid #333; }
.hscroll button { width: 10px; background: #5b5b5b; font-size: 8px; line-height: 9px; }
.map-box { flex: none; height: 47.8vh; max-height: 410px; min-height: 409px; margin-right: 1px; position: relative; background: #efe8e1; overflow: hidden; }
.map { display: block; width: 100%; height: 100%; }
.geo path { stroke-linejoin: round; }
.green { fill: #d0e6bd; stroke: #d0e6bd; stroke-width: 4; opacity: .9; } .air { fill: #d6d5df; } .water { fill: #6fcdf2; } .relief { fill: #e8e0d7; } .hill { fill: #e8e0d7; }
.white, .yellow, .orange, .border { fill: none; }
.white { stroke: #fff; stroke-width: 4; opacity: .9; } .white .fine { stroke-width: 2; }
.yellow { stroke: #f0cb63; stroke-width: 4; } .orange { stroke: #fa9d5c; stroke-width: 4; }
.border { stroke: #74799c; stroke-width: 5; } .border .dash { stroke-width: 3; stroke-dasharray: 12 4; stroke: #a6a8b8; }
.stream { fill: none; stroke: #bed9e3; stroke-width: 3; } .green-stream { stroke: #b5dcc9; }
.lbl { font-family: "Roboto", "Noto Sans", sans-serif; text-anchor: middle; fill: #3e4145; paint-order: stroke; stroke: #f3eee8; stroke-width: 1px; }
.lbl.s { font-size: 8px; } .lbl.m, .lbl .m { font-size: 10px; } .lbl.l { font-size: 11px; font-weight: 700; fill: #222; } .lbl.park { font-size: 8px; fill: #34722c; font-weight: 500; }
.shield { font: bold 7px "Roboto", sans-serif; text-anchor: middle; }
.pin { font: 5px "Liberation Sans", sans-serif; fill: #222; } .pin rect { stroke: #68706a; stroke-width: .5; }
.attrib { position: absolute; left: 0; bottom: 1px; margin: 0; color: #555; }
.attrib a { color: #27b3a9; }
.strip { flex: none; height: 17px; display: flex; justify-content: space-between; align-items: center; background: #222; border-top: 1px solid #444; }
.strip span { margin-left: -4px; }
.grip { width: 11px; height: 11px; align-self: end; background: repeating-linear-gradient(90deg, transparent 0 1px, #222 1px 2px), repeating-linear-gradient(#888 0 1px, #222 1px 2px); clip-path: polygon(100% 0, 100% 100%, 0 100%); }

.badge { align-self: stretch; width: 23px; margin-left: 1px; background: #008200; text-align: center; line-height: 16px; }
.name { margin-left: 4px; }
.spectrum { height: 418px; border: 1px solid #a3641b; border-right: 0; border-top-color: #975b17; background: #404040; overflow: hidden; }
.plots { height: 354px; background: #000; position: relative; }
.plots canvas, .plots svg { position: absolute; inset: 0; width: 100%; height: 100%; }
.plots svg { fill: #c8c8c8; }
.ctl { height: 19px; gap: 2px; padding-left: 3px; }
.ctl .knob { margin: 0 2px; }
.swatch { width: 12px; height: 12px; background: #000; }
.gap { width: 4px; }
.spin { flex: none; display: flex; height: 15px; background: #484848; border: 1px solid #3a3a3a; border-radius: 2px; }
.spin input { flex: 1; min-width: 0; background: none; text-align: right; padding-right: 4px; }
.spin i { width: 9px; background: #5a5a5a; display: flex; flex-direction: column; align-items: center; justify-content: center; gap: 2px; }
.spin i::before, .spin i::after { content: ""; border: 3px solid transparent; }
.spin i::before { border-bottom-color: #999; border-top: 0; } .spin i::after { border-top-color: #999; border-bottom: 0; }

.device { width: 57%; border: 1px solid #a3641b; background: #404040; }
.device .title { height: 16px; }
.tune { display: grid; grid-template-columns: 84px auto 1fr; height: 54px; }
.tune-left { display: flex; flex-direction: column; justify-content: space-between; padding: 4px 0 0 3px; }
.stop { width: 17px; height: 17px; margin-left: 3px; border: 1px solid #3ea03e; border-radius: 2px; background: linear-gradient(#fff, #fff) 50% / 8px 8px no-repeat, #1d891d; }
.tune .dial { align-self: end; margin-bottom: 2px; }
.unit { align-self: end; margin: 0 0 9px 6px; }
.drow { display: flex; align-items: center; gap: 3px; height: 19px; padding: 0 3px 0 2px; }
.drow.lo { margin-top: 19px; } .drow.rate { height: 26px; } .drow.fc { height: 21px; } .drow.gain { height: 16px; }
.drow .amp { margin-left: 5px; }
.drow output { min-width: 15px; text-align: right; }
.gain label { width: 20px; } .gain .range { margin-right: -2px; } .gain output { width: 31px; }
hr { margin: 3px 2px 2px; border: 0; height: 1px; background: #5e5e5e; }
.drow input[type=checkbox] { appearance: none; width: 10px; height: 10px; background: #1b1b1b; display: grid; place-items: center; }
.drow input[type=checkbox]:checked::after { content: "✓"; font: bold 10px/10px "DejaVu Sans", sans-serif; color: #fff; }
.status { flex: none; height: 16px; display: flex; justify-content: flex-end; align-items: center; overflow: hidden; }
.status span { margin-right: -5px; }
```
FILE: app.js
```js
(() => {
  const NS = 'http://www.w3.org/2000/svg';
  function add(parent, tag, attrs, text) {
    const el = document.createElementNS(NS, tag);
    for (const k in attrs) el.setAttribute(k, attrs[k]);
    if (text !== undefined) el.textContent = text;
    parent.appendChild(el);
  }
  let seed = 7;
  function rnd() { seed = (seed * 1664525 + 1013904223) >>> 0; return seed / 4294967296; }

  // Level meter with a tick every 10 dB
  const meter = document.getElementById('meter');
  const mw = meter.getBoundingClientRect().width, step = 58.75;
  add(meter, 'rect', { x: 0, y: 11, width: mw - 10, height: 4, fill: '#579217' });
  for (let i = 0; i < 9; i++) {
    const x = Math.round(mw - 4 - i * step);
    add(meter, 'rect', { x, y: 1, width: 1, height: 17, fill: '#bbb' });
    add(meter, 'rect', { x: x - 29, y: 8, width: 1, height: 2, fill: '#bbb' });
    add(meter, 'text', { x: x - 4, y: 7, 'text-anchor': 'end' }, i ? '-' + i * 10 : '0');
  }

  // Spectrum trace and waterfall
  const cv = document.getElementById('plot');
  const W = cv.width = cv.clientWidth, H = cv.height = cv.clientHeight;
  const c = cv.getContext('2d');
  const marks = { 45: 97, 50: 49, 37: 83, 102: 90, 105: 48, 114: 89, 163: 92, 196: 99, 200: 93, 219: 99, 254: 49, 269: 51, 349: 93, 383: 93, 388: 91, 435: 100, 477: 95 };
  c.strokeStyle = '#8a8a20';
  c.lineWidth = 1;
  c.beginPath();
  for (let x = 25; x < W; x++) {
    let y = 62 + (rnd() + rnd() - 1) * 14;
    if (rnd() < 0.16) y += rnd() * 18;
    if (marks[x]) y = marks[x];
    c.lineTo(x + 0.5, y);
  }
  c.stroke();
  const wh = 146, ww = W - 25;
  const img = c.createImageData(ww, wh);
  for (let y = 0; y < wh; y++) for (let x = 0; x < ww; x++) {
    const n = (rnd() + rnd()) / 2 - x / ww * 0.1;
    const p = (y * ww + x) * 4;
    const line = x === 316 || x === 379 ? 34 : x === 142 || x === 211 ? 12 : 0;
    img.data[p] = Math.max(20, 64 + n * 140 + line);
    img.data[p + 1] = 168 + n * 22;
    img.data[p + 2] = 0;
    img.data[p + 3] = 255;
  }
  c.putImageData(img, 25, 200);

  const ax = document.getElementById('axes');
  add(ax, 'text', { x: 25, y: 13 }, 'CF:1.090G SP:8.000M');
  add(ax, 'path', { d: `M${W} 17.5H25.5V168.5H${W}`, fill: 'none', stroke: '#555' });
  for (let i = 0; i <= 10; i++) add(ax, 'text', { x: 22, y: 21 + i * 15, 'text-anchor': 'end' }, i ? '-' + i * 10 : '0');
  for (let i = 0; i < 7; i++) add(ax, 'text', { x: 24 + i * 71, y: 182, 'text-anchor': 'middle' }, '1.0' + (860 + i * 10));
  for (let i = 0; i <= 5; i++) add(ax, 'text', { x: 22, y: 204 + i * 29, 'text-anchor': 'end' }, i * 5);
  add(ax, 'rect', { x: 217, y: 168, width: 184, height: 7, fill: '#7f4d1d' });
  add(ax, 'path', { d: 'M217 168.5H401M309.5 168V200', fill: 'none', stroke: '#9a8a62' });
  add(ax, 'text', { x: 307, y: 192, 'text-anchor': 'end' }, '1090.000000');
})();
```
